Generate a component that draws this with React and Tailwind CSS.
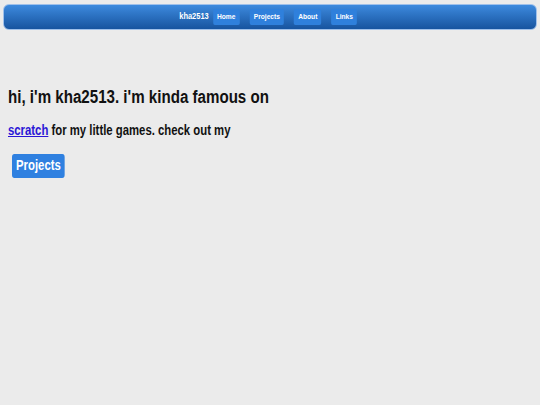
import React from "react";

const navLinks = ["Home", "Projects", "About", "Links"];

// the reference uses a narrow bold sans; Liberation Sans squeezed with scale-x stands in for it
const App = () => {
  return (
    <div
      className="min-h-[405px] bg-[#ebebeb] text-[#111] pt-[4px] px-[3px]"
      style={{ fontFamily: '"Liberation Sans", Arial, sans-serif' }}
    >
      {/* top bar */}
      <nav className="h-[26px] rounded-[6px] border border-[#9fc0ea] bg-gradient-to-b from-[#3d8ade] to-[#17549f] flex items-center justify-center">
        <div className="flex items-center mr-[4px] scale-x-[0.83]">
          <span className="text-[9px] font-bold text-white mr-[5px]">kha2513</span>
          <div className="flex gap-[12px]">
            {navLinks.map((l) => (
              <a
                key={l}
                href="#"
                className="h-[16px] px-[5px] flex items-center rounded-[2px] bg-[#2f80dc] text-white text-[8px] font-bold"
              >
                {l}
              </a>
            ))}
          </div>
        </div>
      </nav>

      <div className="px-[5px] pt-[57px]">
        <h1 className="text-[18px] leading-[20px] font-bold origin-left scale-x-[0.84]">
          hi, i'm kha2513. i'm kinda famous on
        </h1>
        <p className="mt-[15px] text-[14px] leading-[16px] font-bold origin-left scale-x-[0.81]">
          <a href="#" className="text-[#2a16d6] underline">
            scratch
          </a>{" "}
          for my little games. check out my
        </p>
        <div className="mt-[15px]">
          <a
            href="#"
            className="inline-flex items-center ml-[4px] h-[24px] px-[5px] rounded-[3px] bg-[#2f80e0] text-white text-[14px] font-bold origin-left scale-x-[0.81]"
          >
            Projects
          </a>
        </div>
      </div>
    </div>
  );
};

export default App;
